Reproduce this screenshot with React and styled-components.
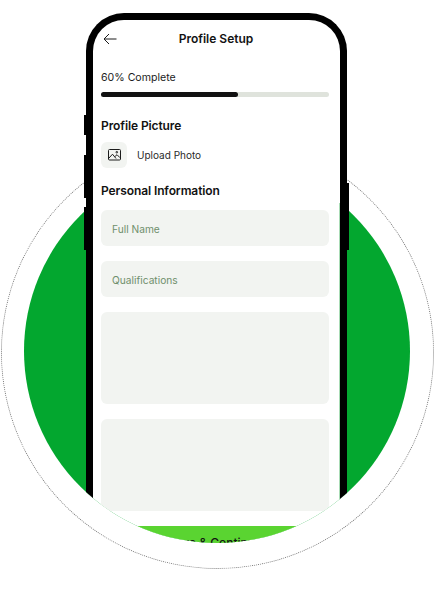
import React from 'react'
import styled, { createGlobalStyle } from 'styled-components'

const GlobalStyle = createGlobalStyle`
  html, body {
    margin: 0;
    padding: 0;
    background: #ffffff;
  }
  body {
    font-family: Inter, "Open Sans", sans-serif;
    color: #121212;
  }
`

const Stage = styled.div`
  position: relative;
  width: 434px;
  height: 608px;
  overflow: hidden;
  background: #ffffff;
`

const DottedRing = styled.div`
  position: absolute;
  left: 1px;
  top: 136px;
  width: 431px;
  height: 431px;
  border: 1px dotted #7a7a7a;
  border-radius: 50%;
`

const GreenDisc = styled.div`
  position: absolute;
  left: 24px;
  top: 159px;
  width: 386px;
  height: 384px;
  border-radius: 50%;
  background: #03a72f;
`

/* the phone is cut off by the lower half of the disc */
const PhoneClip = styled.div`
  position: absolute;
  left: 24px;
  top: 0;
  width: 386px;
  height: 543px;
  overflow: hidden;
  border-radius: 0 0 193px 193px / 0 0 192px 192px;
`

const Phone = styled.div`
  position: relative;
  box-sizing: border-box;
  width: 261px;
  height: 560px;
  margin: 13px 0 0 62px;
  border: 7px solid #000000;
  border-bottom: 0;
  border-radius: 38px 38px 0 0;
  background: #ffffff;
  padding: 1px 11px 0 8px;
`

const SideKey = styled.span`
  position: absolute;
  width: 2px;
  background: #000000;
  top: ${props => props.$top}px;
  height: ${props => props.$height}px;
  ${props => (props.$right ? 'right: -9px;' : 'left: -9px;')}
`

const ScreenEdge = styled.span`
  position: absolute;
  right: 0;
  top: 183px;
  bottom: 0;
  width: 1px;
  background: #a9dcb6;
`

const Header = styled.div`
  display: grid;
  grid-template-columns: 1fr auto 1fr;
  align-items: center;
  height: 36px;
  padding-left: 2px;
`

const Title = styled.h1`
  margin: 0;
  font-size: 12px;
  font-weight: 600;
  line-height: 36px;
`

const ProgressLabel = styled.div`
  margin-top: 14px;
  font-size: 10.6px;
  line-height: 14px;
  color: #1c1c1c;
`

const ProgressTrack = styled.div`
  height: 5px;
  margin-top: 7px;
  border-radius: 3px;
  background: #dfe3dc;
`

const ProgressFill = styled.div`
  height: 100%;
  border-radius: 3px;
  background: #121212;
`

const SectionTitle = styled.h2`
  margin: ${props => props.$top}px 0 0;
  font-size: 12px;
  font-weight: 600;
  line-height: 16px;
  letter-spacing: -0.1px;
`

const UploadRow = styled.div`
  display: flex;
  align-items: center;
  gap: 10px;
  margin-top: 8px;
`

const IconTile = styled.div`
  display: flex;
  align-items: center;
  justify-content: center;
  width: 26px;
  height: 26px;
  border-radius: 6px;
  background: #f2f4f1;
`

const UploadLabel = styled.span`
  font-size: 10px;
  color: #2a2a2a;
`

const Fields = styled.div`
  display: flex;
  flex-direction: column;
  gap: 15px;
  margin-top: 11px;
`

const Field = styled.div`
  box-sizing: border-box;
  height: ${props => props.$height}px;
  padding: 0 11px;
  border-radius: 6px;
  background: #f2f4f1;
  font-size: 10.2px;
  line-height: 38px;
  color: #6f8f6c;
`

const SaveButton = styled.div`
  height: 36px;
  margin-top: 15px;
  border-radius: 6px;
  background: #5ad431;
  font-size: 12px;
  font-weight: 500;
  line-height: 33px;
  text-align: center;
  color: #121212;
`

function ArrowIcon() {
  return (
    <svg width='14' height='12' viewBox='0 0 14 12' fill='none' stroke='#1a1a1a' strokeWidth='1'>
      <path d='M13.5 6H1M6 1 1 6l5 5' />
    </svg>
  )
}

function PhotoIcon() {
  return (
    <svg width='13' height='12' viewBox='0 0 13 12' fill='none' stroke='#1c1c1c' strokeWidth='1'>
      <rect x='0.5' y='0.5' width='12' height='10.5' rx='1' />
      <path d='M1 9 4.5 5.2 8 9.5M7 7.5l2-1.8 3 3' />
      <circle cx='8.8' cy='3.2' r='0.8' />
    </svg>
  )
}

export default function App() {
  return (
    <Stage>
      <GlobalStyle />
      <DottedRing />
      <GreenDisc />
      <PhoneClip>
        <Phone>
          <SideKey $top={95} $height={20} />
          <SideKey $top={135} $height={43} />
          <SideKey $top={187} $height={43} />
          <SideKey $right $top={163} $height={67} />
          <ScreenEdge />
          <Header>
            <ArrowIcon />
            <Title>Profile Setup</Title>
          </Header>
          <ProgressLabel>60% Complete</ProgressLabel>
          <ProgressTrack>
            <ProgressFill style={{ width: '60%' }} />
          </ProgressTrack>
          <SectionTitle $top={21}>Profile Picture</SectionTitle>
          <UploadRow>
            <IconTile>
              <PhotoIcon />
            </IconTile>
            <UploadLabel>Upload Photo</UploadLabel>
          </UploadRow>
          <SectionTitle $top={15}>Personal Information</SectionTitle>
          <Fields>
            <Field $height={36}>Full Name</Field>
            <Field $height={36}>Qualifications</Field>
            <Field $height={92} />
            <Field $height={92} />
          </Fields>
          <SaveButton>Save &amp; Continue</SaveButton>
        </Phone>
      </PhoneClip>
    </Stage>
  )
}
